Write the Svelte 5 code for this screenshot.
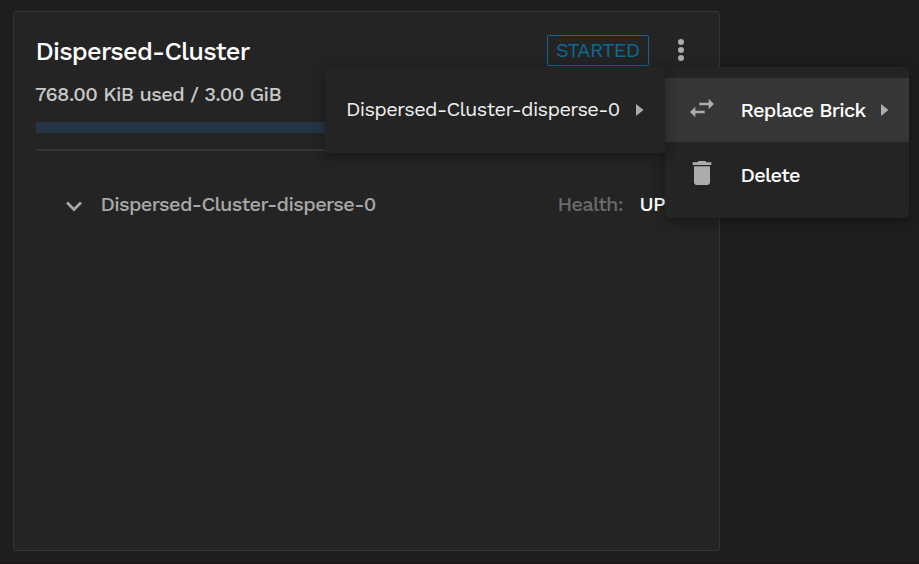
<script>
  const cluster = 'Dispersed-Cluster';
  const subvolume = 'Dispersed-Cluster-disperse-0';
</script>

<main>
  <section class="card">
    <header>
      <h1>{cluster}</h1>
      <span class="status">STARTED</span>
      <svg class="dots" width="8" height="24" viewBox="0 0 8 24" fill="#acacac">
        <circle cx="4" cy="4" r="3" /><circle cx="4" cy="12" r="3" /><circle cx="4" cy="20" r="3" />
      </svg>
    </header>
    <p class="usage">768.00 KiB used / 3.00 GiB</p>
    <div class="progress"></div>
    <hr />
    <div class="row">
      <svg width="16" height="11" viewBox="0 0 16 11" fill="none" stroke="#a8a8a8" stroke-width="2.7">
        <path d="M1 1.5 8 8.5 15 1.5" />
      </svg>
      <span class="name">{subvolume}</span>
      <span class="health">Health:</span>
      <span class="up">UP</span>
    </div>
  </section>

  <div class="menu actions">
    <div class="item active">
      <svg class="icon" width="32" height="32" viewBox="0 0 24 24" fill="#acacac">
        <path d="M6.99 11 3 15l3.99 4v-3H14v-2H6.99v-3zM21 9l-3.99-4v3H10v2h7.01v3L21 9z" />
      </svg>
      <span class="label replace">Replace Brick</span>
      <svg class="arrow" width="8" height="12" viewBox="0 0 8 12" fill="#acacac"><path d="M0 0 7.5 6 0 12z" /></svg>
    </div>
    <div class="item delete">
      <svg class="icon" width="32" height="32" viewBox="0 0 24 24" fill="#acacac">
        <path d="M6 19c0 1.1.9 2 2 2h8c1.1 0 2-.9 2-2V7H6v12zM19 4h-3.5l-1-1h-5l-1 1H5v2h14V4z" />
      </svg>
      <span class="label">Delete</span>
    </div>
  </div>

  <div class="menu submenu">
    <div class="item">
      <span class="target">{subvolume}</span>
      <svg class="arrow" width="8" height="12" viewBox="0 0 8 12" fill="#acacac"><path d="M0 0 7.5 6 0 12z" /></svg>
    </div>
  </div>
</main>

<style>
  :global(body) { background: #1e1e1e; }
  main {
    position: relative;
    box-sizing: border-box;
    width: 919px;
    height: 564px;
    padding: 11px 13px;
    overflow: hidden;
    background: #1e1e1e;
    border-bottom: 2px solid #1b1719;
    font-family: 'Work Sans', Inter, sans-serif;
    font-size: 20px;
    font-weight: 500;
    letter-spacing: -.6px;
    color: #fff;
    white-space: nowrap;
  }
  .card {
    box-sizing: border-box;
    width: 707px;
    height: 540px;
    padding: 23px 22px;
    border: 1px solid #353535;
    border-radius: 3px;
    background: #242424;
  }
  header { display: flex; align-items: center; height: 31px; }
  h1 { margin: 2px 0 0 -.5px; flex: 1; font-size: 25.5px; font-weight: 540; line-height: 31px; letter-spacing: -.8px; }
  .status {
    box-sizing: border-box;
    width: 102px;
    height: 31px;
    border: 1px solid #0c6a94;
    border-radius: 2px;
    color: #0c6a94;
    line-height: 29px;
    padding-left: 8px;
    font-weight: 420;
  }
  .dots { margin: -2px 12px 0 28px; }
  .usage { margin: 18px 0 0 -1px; height: 20px; line-height: 20px; color: #c8c8c8; letter-spacing: -.59px; }
  .progress { height: 11px; margin-top: 18px; background: #263545; }
  hr { height: 2px; margin: 16px 0 0; border: 0; background: #363636; }
  .row { display: flex; align-items: center; height: 30px; margin-top: 38px; padding-left: 29.5px; }
  .row svg { margin-top: 5px; }
  .name { width: 457px; margin-left: 19px; color: #a8a8a8; letter-spacing: -.64px; }
  .health { width: 82px; color: #6b6b6b; font-weight: 540; letter-spacing: -.68px; }
  .up { font-weight: 550; }
  .menu {
    position: absolute;
    box-sizing: border-box;
    top: 67px;
    padding: 11px 0;
    border-radius: 5px;
    background: #242424;
    box-shadow: 0 5px 12px rgba(0, 0, 0, .22), 0 1px 16px rgba(0, 0, 0, .12);
  }
  .actions { left: 665px; width: 244px; height: 151px; }
  .submenu { left: 325px; width: 340px; height: 86px; }
  .item { display: flex; align-items: center; height: 64px; padding-left: 20.5px; }
  .submenu .item { padding-left: 21px; }
  .delete { padding-top: 1px; }
  .active { background: #363636; }
  .icon { margin-top: -4px; }
  .label { margin-left: 23px; font-weight: 550; letter-spacing: -.7px; }
  .replace { width: 140px; margin-top: -1px; }
  .target { width: 289.5px; margin-top: -2px; color: #f0f0f0; font-weight: 430; letter-spacing: -.63px; }
</style>
